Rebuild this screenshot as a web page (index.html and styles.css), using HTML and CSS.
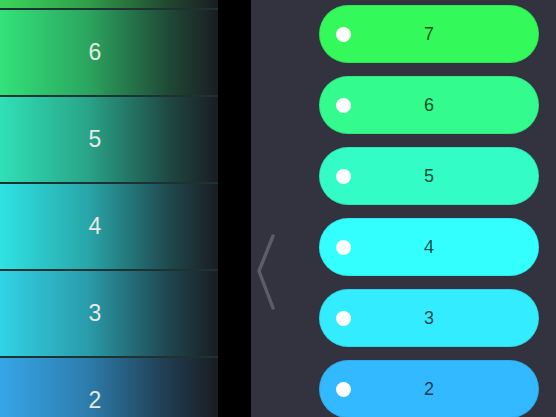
FILE: index.html
```html
<!DOCTYPE html>
<html>
<head>
<meta charset="utf-8">
<link rel="stylesheet" href="styles.css">
</head>
<body>
<div class="screen">
  <div class="left">
    <div class="rows">
      <div class="row r7"></div>
      <div class="row r6"><span>6</span></div>
      <div class="row r5"><span>5</span></div>
      <div class="row r4"><span>4</span></div>
      <div class="row r3"><span>3</span></div>
      <div class="row r2"><span>2</span></div>
    </div>
  </div>
  <div class="gap"></div>
  <div class="right">
    <div class="handle">
      <svg width="22" height="76" viewBox="0 0 22 76"><polyline points="17,2 3,37 17,74" fill="none" stroke="#5c5d68" stroke-width="3.4" stroke-linecap="round" stroke-linejoin="round"/></svg>
    </div>
    <div class="pills">
      <div class="pill p7"><i class="dot"></i><span>7</span></div>
      <div class="pill p6"><i class="dot"></i><span>6</span></div>
      <div class="pill p5"><i class="dot"></i><span>5</span></div>
      <div class="pill p4"><i class="dot"></i><span>4</span></div>
      <div class="pill p3"><i class="dot"></i><span>3</span></div>
      <div class="pill p2"><i class="dot"></i><span>2</span></div>
    </div>
  </div>
</div>
</body>
</html>
```
FILE: styles.css
```css
html, body {
  margin: 0;
  padding: 0;
  width: 556px;
  height: 417px;
  overflow: hidden;
  background: #32333e;
}
.screen {
  display: flex;
  width: 556px;
  height: 417px;
  overflow: hidden;
  font-family: "Liberation Sans", Arial, sans-serif;
}
.left {
  width: 218px;
  flex: none;
  overflow: hidden;
}
.rows {
  margin-top: -77px;
  display: flex;
  flex-direction: column;
}
.row {
  height: 85px;
  border-bottom: 2px solid #1c3331;
  flex: none;
  display: flex;
  align-items: center;
  justify-content: center;
  padding-right: 28px;
  color: #e3ebe6;
  font-size: 23px;
  background-image: linear-gradient(to right, rgba(26,28,34,0) 0%, rgba(26,28,34,0.3) 40%, rgba(26,28,34,0.78) 78%, rgba(26,28,34,1) 100%);
}
.r7 { background-color: #3ad65a; }
.r6 { background-color: #33e27a; }
.r5 { background-color: #30e0b6; }
.r4 { background-color: #2fe3e4; }
.r3 { background-color: #31d3e6; }
.r2 { background-color: #36a6e8; }
.gap {
  width: 33px;
  flex: none;
  background: #000;
}
.right {
  flex: 1;
  display: flex;
  background: #32333e;
}
.handle {
  width: 68px;
  flex: none;
  padding-top: 234px;
  padding-left: 5px;
  box-sizing: border-box;
}
.pills {
  display: flex;
  flex-direction: column;
  gap: 13px;
  padding-top: 5px;
}
.pill {
  width: 220px;
  height: 58px;
  border-radius: 29px;
  flex: none;
  display: grid;
  grid-template-columns: 1fr auto 1fr;
  align-items: center;
  color: rgba(0,0,0,0.72);
  font-size: 18px;
  box-shadow: inset 0 0 0 1px rgba(0,0,0,0.08);
}
.pill span { grid-column: 2; }
.dot {
  grid-column: 1;
  grid-row: 1;
  justify-self: start;
  margin-left: 17px;
  width: 15px;
  height: 15px;
  border-radius: 50%;
  background: #fff;
}
.p7 { background: #33f95a; }
.p6 { background: #33fb8d; }
.p5 { background: #33fcc6; }
.p4 { background: #33ffff; }
.p3 { background: #33ecff; }
.p2 { background: #33b9ff; }
```
